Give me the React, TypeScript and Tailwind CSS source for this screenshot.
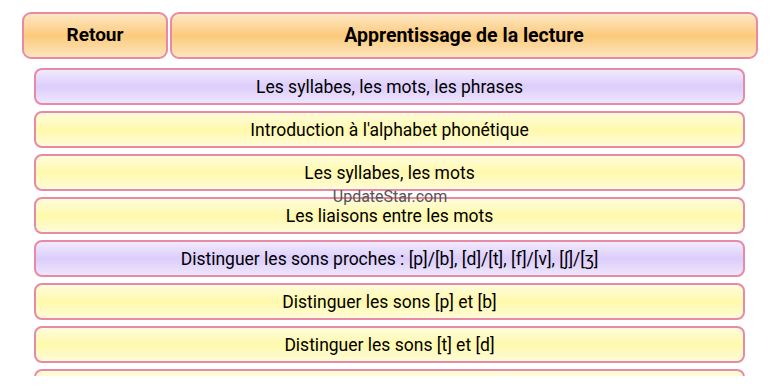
import React from "react";

const rows: { label: string; kind: "y" | "p" }[] = [
  { label: "Les syllabes, les mots, les phrases", kind: "p" },
  { label: "Introduction à l'alphabet phonétique", kind: "y" },
  { label: "Les syllabes, les mots", kind: "y" },
  { label: "Les liaisons entre les mots", kind: "y" },
  { label: "Distinguer les sons proches : [p]/[b], [d]/[t], [f]/[v], [ʃ]/[ʒ]", kind: "p" },
  { label: "Distinguer les sons [p] et [b]", kind: "y" },
  { label: "Distinguer les sons [t] et [d]", kind: "y" },
  { label: "", kind: "y" },
];

export default function App() {
  return (
    <div
      className="relative w-[780px] h-[390px] bg-white overflow-hidden"
      style={{ fontFamily: "Roboto, 'Noto Sans', sans-serif" }}
    >
      <div className="h-[376px] overflow-hidden pt-[12px]">
        <div className="flex gap-[2px] pl-[22px]">
          <div className="w-[146px] h-[47px] rounded-[9px] border-2 border-[#e88aa6] bg-[linear-gradient(to_bottom,#fde8c4,#fcca7c_50%,#fde5bd)] flex items-center justify-center text-[19px] font-bold text-black">
            Retour
          </div>
          <div className="w-[588px] h-[47px] rounded-[9px] border-2 border-[#e88aa6] bg-[linear-gradient(to_bottom,#fde8c4,#fcca7c_50%,#fde5bd)] flex items-center justify-center text-[19.5px] font-bold text-black">
            Apprentissage de la lecture
          </div>
        </div>
        <div className="flex flex-col gap-[6px] pl-[34px] mt-[9px]">
          {rows.map((r, i) => (
            <div
              key={i}
              className={
                r.kind === "p"
                  ? "w-[711px] h-[37px] shrink-0 rounded-[8px] border-2 border-[#e88aa6] bg-[linear-gradient(to_bottom,#f1eafd,#dccdfb_50%,#eee6fd)] flex items-center justify-center pt-[1px] text-[17.5px] text-black"
                  : "w-[711px] h-[37px] shrink-0 rounded-[8px] border-2 border-[#e88aa6] bg-[linear-gradient(to_bottom,#fffcdc,#fff9ac_50%,#fffbd8)] flex items-center justify-center pt-[1px] text-[17.5px] text-black"
              }
            >
              {r.label}
            </div>
          ))}
        </div>
      </div>
      <div className="absolute left-0 right-0 top-[187px] flex justify-center">
        <span className="text-[16px] text-[#555] leading-[20px]">UpdateStar.com</span>
      </div>
    </div>
  );
}
